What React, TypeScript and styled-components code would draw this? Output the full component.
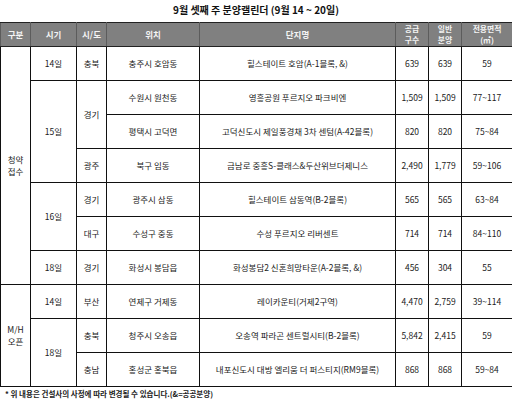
import React from "react"
import styled, { createGlobalStyle } from 'styled-components'

const GlobalStyle = createGlobalStyle`
  html, body {
    margin: 0;
    padding: 0;
    background: #fff;
  }
  body {
    font-family: "Noto Sans CJK KR", "Noto Sans", "Liberation Sans", sans-serif;
    color: #222;
  }
`;

const Page = styled.div`
  width: 512px;
  height: 403px;
  overflow: hidden;
`;

const Title = styled.div`
  height: 22px;
  line-height: 20px;
  text-align: center;
  font-size: 10px;
  font-weight: 700;
  color: #111;
`;

const Table = styled.table`
  width: 512px;
  border-collapse: collapse;
  table-layout: fixed;
  font-size: 8.5px;
`;

const HeadCell = styled.th<{ $two?: boolean }>`
  height: 22px;
  padding: 0;
  background: #808080;
  color: #f4f4f4;
  font-weight: 700;
  font-size: ${p => (p.$two ? '7.8px' : '8.5px')};
  line-height: ${p => (p.$two ? '11.4px' : '12px')};
  border: 1px solid #222;
  border-left-color: #5c5c5c;
  border-right-color: #5c5c5c;
  text-align: center;
  vertical-align: middle;
`;

const Cell = styled.td<{ $align?: string }>`
  height: 33px;
  padding: 0 0 0 ${p => (p.$align === 'left' ? '10px' : '0')};
  border: 1px solid #111;
  text-align: ${p => p.$align || 'center'};
  vertical-align: middle;
  line-height: 12.5px;
  white-space: nowrap;
  overflow: hidden;
`;

const Note = styled.div`
  padding: 1px 0 0 5px;
  font-size: 7.5px;
  font-weight: 700;
  color: #222;
`;

type Row = {
  group?: [string, number]
  date?: [string, number]
  region?: [string, number]
  place: string
  name: string
  supply: string
  general: string
  area: string
}

const rows: Row[] = [
  { group: ['청약\n접수', 7], date: ['14일', 1], region: ['충북', 1], place: '충주시 호암동', name: '힐스테이트 호암(A-1블록, &)', supply: '639', general: '639', area: '59' },
  { date: ['15일', 3], region: ['경기', 2], place: '수원시 원천동', name: '영흥공원 푸르지오 파크비엔', supply: '1,509', general: '1,509', area: '77~117' },
  { place: '평택시 고덕면', name: '고덕신도시 제일풍경채 3차 센텀(A-42블록)', supply: '820', general: '820', area: '75~84' },
  { region: ['광주', 1], place: '북구 임동', name: '금남로 중흥S-클래스&두산위브더제니스', supply: '2,490', general: '1,779', area: '59~106' },
  { date: ['16일', 2], region: ['경기', 1], place: '광주시 삼동', name: '힐스테이트 삼동역(B-2블록)', supply: '565', general: '565', area: '63~84' },
  { region: ['대구', 1], place: '수성구 중동', name: '수성 푸르지오 리버센트', supply: '714', general: '714', area: '84~110' },
  { date: ['18일', 1], region: ['경기', 1], place: '화성시 봉담읍', name: '화성봉담2 신혼희망타운(A-2블록, &)', supply: '456', general: '304', area: '55' },
  { group: ['M/H\n오픈', 3], date: ['14일', 1], region: ['부산', 1], place: '연제구 거제동', name: '레이카운티(거제2구역)', supply: '4,470', general: '2,759', area: '39~114' },
  { date: ['18일', 2], region: ['충북', 1], place: '청주시 오송읍', name: '오송역 파라곤 센트럴시티(B-2블록)', supply: '5,842', general: '2,415', area: '59' },
  { region: ['충남', 1], place: '홍성군 홍북읍', name: '내포신도시 대방 엘리움 더 퍼스티지(RM9블록)', supply: '868', general: '868', area: '59~84' },
]

const Multi = ({ text }: { text: string }) => (
  <>
    {text.split('\n').map((t, i) => (
      <React.Fragment key={i}>
        {i > 0 && <br />}
        {t}
      </React.Fragment>
    ))}
  </>
)

const App = () => {
  return (
    <Page>
      <GlobalStyle />
      <Title>9월 셋째 주 분양캘린더 (9월 14 ~ 20일)</Title>
      <Table>
        <colgroup>
          <col style={{ width: 30 }} />
          <col style={{ width: 46 }} />
          <col style={{ width: 30 }} />
          <col style={{ width: 93 }} />
          <col style={{ width: 196 }} />
          <col style={{ width: 33 }} />
          <col style={{ width: 33 }} />
          <col style={{ width: 51 }} />
        </colgroup>
        <thead>
          <tr>
            <HeadCell>구분</HeadCell>
            <HeadCell>시기</HeadCell>
            <HeadCell>시/도</HeadCell>
            <HeadCell>위치</HeadCell>
            <HeadCell>단지명</HeadCell>
            <HeadCell $two>공급<br />구수</HeadCell>
            <HeadCell $two>일반<br />분양</HeadCell>
            <HeadCell $two>전용면적<br />(㎡)</HeadCell>
          </tr>
        </thead>
        <tbody>
          {rows.map((r, i) => (
            <tr key={i}>
              {r.group && <Cell rowSpan={r.group[1]}><Multi text={r.group[0]} /></Cell>}
              {r.date && <Cell rowSpan={r.date[1]}>{r.date[0]}</Cell>}
              {r.region && <Cell rowSpan={r.region[1]}>{r.region[0]}</Cell>}
              <Cell>{r.place}</Cell>
              <Cell>{r.name}</Cell>
              <Cell>{r.supply}</Cell>
              <Cell>{r.general}</Cell>
              <Cell>{r.area}</Cell>
            </tr>
          ))}
        </tbody>
      </Table>
      <Note>* 위 내용은 건설사의 사정에 따라 변경될 수 있습니다.(&=공공분양)</Note>
    </Page>
  )
}

export default App
